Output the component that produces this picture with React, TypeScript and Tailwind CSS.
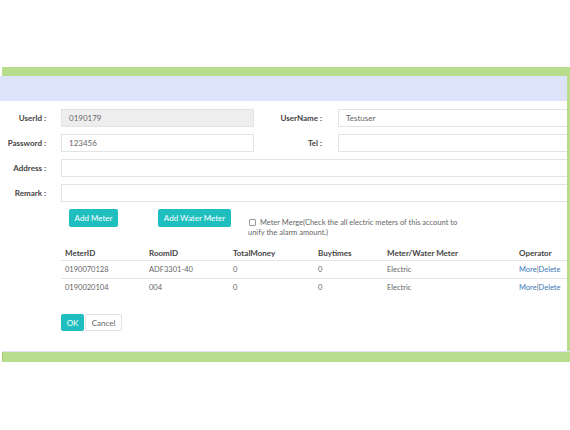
import React from "react";

interface MeterRow {
    meterId: string;
    roomId: string;
    totalMoney: string;
    buyTimes: string;
    kind: string;
}

const rows: MeterRow[] = [
    { meterId: "0190070128", roomId: "ADF3301-40", totalMoney: "0", buyTimes: "0", kind: "Electric" },
    { meterId: "0190020104", roomId: "004", totalMoney: "0", buyTimes: "0", kind: "Electric" },
];

const Label: React.FC<{ text: string; className?: string }> = ({ text, className }) => (
    <div className={`text-right font-bold text-[8px] text-[#444] ${className ?? ""}`}>{text}</div>
);

const Field: React.FC<{ value?: string; disabled?: boolean; className?: string }> = ({ value, disabled, className }) => (
    <div
        className={`h-[18px] border border-[#e3e3e3] flex items-center pl-[7px] text-[8px] text-[#666] ${
            disabled ? "bg-[#eeeeee]" : "bg-white"
        } ${className ?? ""}`}
    >
        {value}
    </div>
);

const App: React.FC = () => {
    return (
        <div className="w-[570px] h-[430px] bg-white overflow-hidden font-['Lato',sans-serif]">
            <div className="pt-[67px]">
                {/* green top bar */}
                <div className="ml-[2px] h-[9px] bg-[#b7dd8d]" />

                <div className="flex">
                    <div className="flex-1 min-w-0 overflow-hidden">
                        {/* header */}
                        <div className="h-[25px] bg-[#dce3fb]" />

                        {/* body */}
                        <div className="h-[250px] pt-[8px]">
                            <div className="flex items-center h-[18px]">
                                <Label text="UserId :" className="w-[46px]" />
                                <Field value="0190179" disabled className="ml-[15px] w-[193px]" />
                                <Label text="UserName :" className="w-[68px]" />
                                <Field value="Testuser" className="ml-[16px] flex-1 border-r-0" />
                            </div>
                            <div className="flex items-center h-[18px] mt-[7px]">
                                <Label text="Password :" className="w-[46px]" />
                                <Field value="123456" className="ml-[15px] w-[193px]" />
                                <Label text="Tel :" className="w-[68px]" />
                                <Field className="ml-[16px] flex-1 border-r-0" />
                            </div>
                            <div className="flex items-center h-[18px] mt-[7px]">
                                <Label text="Address :" className="w-[46px]" />
                                <Field className="ml-[15px] flex-1 border-r-0" />
                            </div>
                            <div className="flex items-center h-[18px] mt-[7px]">
                                <Label text="Remark :" className="w-[46px]" />
                                <Field className="ml-[15px] flex-1 border-r-0" />
                            </div>

                            {/* actions */}
                            <div className="flex items-start mt-[7px] h-[29px]">
                                <button className="ml-[69px] w-[49px] h-[18px] rounded-[2px] bg-[#1fbfbf] text-white text-[8px]">
                                    Add Meter
                                </button>
                                <button className="ml-[40px] w-[73px] h-[18px] rounded-[2px] bg-[#1fbfbf] text-white text-[8px]">
                                    Add Water Meter
                                </button>
                                <div className="ml-[17px] mt-[9px] w-[215px] text-[7.5px] leading-[10px] text-[#666]">
                                    <span className="inline-block w-[7px] h-[7px] border border-[#999] rounded-[1px] align-[-1px] mr-[2px] ml-[1px]" />
                                    {" "}Meter Merge(Check the all electric meters of this account to unify the alarm amount.)
                                </div>
                            </div>

                            {/* meters table */}
                            <div className="ml-[61px] mt-[7px] text-[7.5px]">
                                <div className="grid grid-cols-[84px_84px_85px_69px_132px_1fr] h-[16px] items-center border-b border-[#e6e6e6] font-bold text-[8px] text-[#444]">
                                    <div className="pl-[4px]">MeterID</div>
                                    <div className="pl-[4px]">RoomID</div>
                                    <div className="pl-[4px]">TotalMoney</div>
                                    <div className="pl-[4px]">Buytimes</div>
                                    <div className="pl-[4px]">Meter/Water Meter</div>
                                    <div className="pl-[4px]">Operator</div>
                                </div>
                                {rows.map((r, i) => (
                                    <div
                                        key={i}
                                        className={`grid grid-cols-[84px_84px_85px_69px_132px_1fr] h-[18px] items-center text-[#666] ${
                                            i === 0 ? "border-b border-[#e6e6e6]" : ""
                                        }`}
                                    >
                                        <div className="pl-[4px]">{r.meterId}</div>
                                        <div className="pl-[4px]">{r.roomId}</div>
                                        <div className="pl-[4px]">{r.totalMoney}</div>
                                        <div className="pl-[4px]">{r.buyTimes}</div>
                                        <div className="pl-[4px]">{r.kind}</div>
                                        <div className="pl-[4px] text-[#3a78b8] whitespace-nowrap">
                                            More<span className="text-[#555]">|</span>Delete
                                        </div>
                                    </div>
                                ))}
                            </div>

                            <div className="flex ml-[61px] mt-[17px]">
                                <button className="w-[23px] h-[17px] rounded-[2px] bg-[#1fbfbf] text-white text-[8px]">OK</button>
                                <button className="ml-[1px] w-[37px] h-[17px] rounded-[2px] border border-[#e2e2e2] bg-white text-[#666] text-[8px]">
                                    Cancel
                                </button>
                            </div>
                        </div>
                    </div>
                    {/* right green edge */}
                    <div className="w-[3px] bg-[#b7dd8d]" />
                </div>

                {/* bottom */}
                <div className="h-px ml-[2px] bg-[#dfe2f2]" />
                <div className="ml-[2px] h-[10px] bg-[#b7dd8d] border-l border-[#a6cc7e]" />
            </div>
        </div>
    );
};

export default App;
